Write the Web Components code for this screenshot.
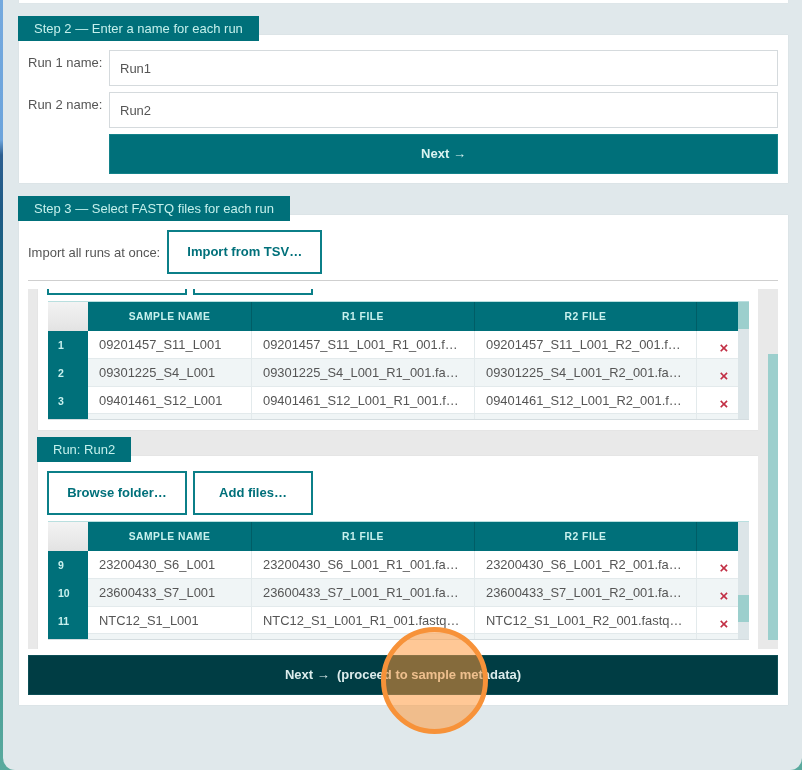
<!DOCTYPE html>
<html lang="en">
<head>
<meta charset="utf-8">
<title>Select FASTQ files</title>
<style>
    html, body { margin: 0; height: 770px; overflow: hidden; }
    body {
        font-family: "Liberation Sans", Arial, sans-serif;
        background: linear-gradient(to bottom, #74a9de 0, #6ca4dc 140px, #2d5f90 155px, #1e5a85 210px, #176a80 300px, #2f8a8c 500px, #5aaa9e 770px);
    }
</style>
</head>
<body>
<app-window>
    <step-panel label="Step 2 — Enter a name for each run" style="--pad-bottom: 9px; margin-bottom: 13px;">
        <name-field label="Run 1 name:" value="Run1"></name-field>
        <name-field label="Run 2 name:" value="Run2"></name-field>
        <teal-button style="margin-left: 81px;">Next →</teal-button>
    </step-panel>

    <step-panel label="Step 3 — Select FASTQ files for each run">
        <import-bar></import-bar>
        <scroll-area offset="-72" thumb-top="65" thumb-height="286">
            <step-panel label="Run: Run1" style="--pad-right: 9px; margin-bottom: 7px;">
                <file-buttons></file-buttons>
                <file-table thumb-top="0">
                    <file-row n="1" name="09201457_S11_L001" r1="09201457_S11_L001_R1_001.f…" r2="09201457_S11_L001_R2_001.f…"></file-row>
                    <file-row n="2" name="09301225_S4_L001" r1="09301225_S4_L001_R1_001.fa…" r2="09301225_S4_L001_R2_001.fa…"></file-row>
                    <file-row n="3" name="09401461_S12_L001" r1="09401461_S12_L001_R1_001.f…" r2="09401461_S12_L001_R2_001.f…"></file-row>
                    <file-row></file-row>
                </file-table>
            </step-panel>
            <step-panel label="Run: Run2" style="--pad-right: 9px;">
                <file-buttons></file-buttons>
                <file-table thumb-top="73">
                    <file-row n="9" name="23200430_S6_L001" r1="23200430_S6_L001_R1_001.fa…" r2="23200430_S6_L001_R2_001.fa…"></file-row>
                    <file-row n="10" name="23600433_S7_L001" r1="23600433_S7_L001_R1_001.fa…" r2="23600433_S7_L001_R2_001.fa…"></file-row>
                    <file-row n="11" name="NTC12_S1_L001" r1="NTC12_S1_L001_R1_001.fastq…" r2="NTC12_S1_L001_R2_001.fastq…"></file-row>
                    <file-row></file-row>
                </file-table>
            </step-panel>
        </scroll-area>
        <teal-button dark style="margin-top: 6px;">Next →&nbsp; (proceed to sample metadata)</teal-button>
    </step-panel>
    <tap-marker></tap-marker>
</app-window>

<script>
// small helper, every element just clones its own template
function makeTemplate(html) {
    const template = document.createElement('template');
    template.innerHTML = html;
    return template;
}

const windowTemplate = makeTemplate(`
    <style>
        :host {
            display: block;
            position: relative;
            box-sizing: border-box;
            height: 770px;
            margin-left: 3px;
            padding: 0 14px 0 15px;
            background: #e0e8eb;
            border-radius: 0 0 12px 12px;
            overflow: hidden;
            filter: blur(0.4px);
        }
        .stub {
            height: 3px;
            margin: 0 0 13px 1px;
            background: #fff;
            box-shadow: 0 0 1px rgba(0, 0, 0, 0.1);
        }
    </style>
    <div class="stub"></div>
    <slot></slot>
`);

class AppWindow extends HTMLElement {
    constructor() {
        super();
        this.attachShadow({ mode: 'open' }).appendChild(windowTemplate.content.cloneNode(true));
    }
}

const panelTemplate = makeTemplate(`
    <style>
        :host { display: block; }
        .tab {
            position: relative;
            z-index: 1;
            display: inline-block;
            vertical-align: top;
            height: 25px;
            line-height: 25px;
            padding: 0 16px;
            background: #00707a;
            color: #c4f0ec;
            font-size: 13px;
            white-space: nowrap;
        }
        .head { height: 25px; }
        .body {
            margin: -6px 0 0 1px;
            padding: 15px var(--pad-right, 10px) var(--pad-bottom, 10px) 9px;
            background: #fff;
            box-shadow: 0 0 1px rgba(0, 0, 0, 0.1);
        }
    </style>
    <div class="head"><span class="tab"></span></div>
    <div class="body"><slot></slot></div>
`);

class StepPanel extends HTMLElement {
    constructor() {
        super();
        const shadow = this.attachShadow({ mode: 'open' });
        shadow.appendChild(panelTemplate.content.cloneNode(true));
        shadow.querySelector('.tab').textContent = this.getAttribute('label');
    }
}

const fieldTemplate = makeTemplate(`
    <style>
        :host {
            display: flex;
            margin-bottom: 6px;
            font-size: 13px;
            color: #555;
        }
        .label { width: 81px; flex: none; padding-top: 5px; }
        .input {
            flex: 1;
            box-sizing: border-box;
            height: 36px;
            line-height: 34px;
            padding: 1px 10px 0;
            border: 1px solid #d5dadd;
            background: #fff;
        }
    </style>
    <div class="label"></div>
    <div class="input"></div>
`);

class NameField extends HTMLElement {
    constructor() {
        super();
        const shadow = this.attachShadow({ mode: 'open' });
        shadow.appendChild(fieldTemplate.content.cloneNode(true));
        shadow.querySelector('.label').textContent = this.getAttribute('label');
        shadow.querySelector('.input').textContent = this.getAttribute('value');
    }
}

const tealTemplate = makeTemplate(`
    <style>
        :host {
            display: block;
            box-sizing: border-box;
            height: 40px;
            line-height: 40px;
            text-align: center;
            background: #00707a;
            color: #d9f3f1;
            font-size: 13px;
            font-weight: bold;
            box-shadow: inset 0 0 0 1px #14828a;
        }
        :host([dark]) {
            background: #003d44;
            color: #dcecec;
            box-shadow: inset 0 0 0 1px #0d4f56;
        }
    </style>
    <slot></slot>
`);

class TealButton extends HTMLElement {
    constructor() {
        super();
        this.attachShadow({ mode: 'open' }).appendChild(tealTemplate.content.cloneNode(true));
    }
}

const outlineTemplate = makeTemplate(`
    <style>
        :host {
            display: inline-block;
            box-sizing: border-box;
            height: 44px;
            line-height: 40px;
            text-align: center;
            border: 2px solid #0b7f88;
            background: #fff;
            color: #00707a;
            font-size: 13px;
            font-weight: bold;
            white-space: nowrap;
        }
    </style>
    <slot></slot>
`);

class OutlineButton extends HTMLElement {
    constructor() {
        super();
        this.attachShadow({ mode: 'open' }).appendChild(outlineTemplate.content.cloneNode(true));
    }
}

const importTemplate = makeTemplate(`
    <style>
        :host {
            display: flex;
            align-items: center;
            gap: 7px;
            padding-bottom: 6px;
            margin-bottom: 8px;
            border-bottom: 1px solid #cfcfcf;
            font-size: 13px;
            color: #555;
        }
        outline-button { width: 155px; }
    </style>
    <span>Import all runs at once:</span>
    <outline-button>Import from TSV…</outline-button>
`);

class ImportBar extends HTMLElement {
    constructor() {
        super();
        this.attachShadow({ mode: 'open' }).appendChild(importTemplate.content.cloneNode(true));
    }
}

const scrollTemplate = makeTemplate(`
    <style>
        :host {
            display: flex;
            height: 360px;
            background: #e9e9e9;
        }
        .view {
            width: 721px;
            margin: 0 10px 0 9px;
            overflow: hidden;
        }
        .inner { margin-top: var(--offset); }
        .bar { width: 10px; }
        .thumb {
            margin-top: var(--thumb-top);
            height: var(--thumb-height);
            background: #9ccfcd;
        }
    </style>
    <div class="view"><div class="inner"><slot></slot></div></div>
    <div class="bar"><div class="thumb"></div></div>
`);

class ScrollArea extends HTMLElement {
    constructor() {
        super();
        this.attachShadow({ mode: 'open' }).appendChild(scrollTemplate.content.cloneNode(true));
        this.style.setProperty('--offset', this.getAttribute('offset') + 'px');
        this.style.setProperty('--thumb-top', this.getAttribute('thumb-top') + 'px');
        this.style.setProperty('--thumb-height', this.getAttribute('thumb-height') + 'px');
    }
}

const fileButtonsTemplate = makeTemplate(`
    <style>
        :host { display: flex; gap: 6px; margin-bottom: 6px; }
        .browse { width: 140px; }
        .add { width: 120px; }
    </style>
    <outline-button class="browse">Browse folder…</outline-button>
    <outline-button class="add">Add files…</outline-button>
`);

class FileButtons extends HTMLElement {
    constructor() {
        super();
        this.attachShadow({ mode: 'open' }).appendChild(fileButtonsTemplate.content.cloneNode(true));
    }
}

const tableTemplate = makeTemplate(`
    <style>
        :host {
            display: flex;
            box-sizing: border-box;
            width: 701px;
            height: 119px;
            margin-left: 1px;
            border-top: 1px solid #b9dfdf;
            border-bottom: 1px solid #d5dde0;
            overflow: hidden;
        }
        .main { width: 690px; flex: none; }
        .head {
            display: grid;
            grid-template-columns: 40px 164px 223px 222px 41px;
            height: 29px;
            line-height: 29px;
            background: #00707a;
            color: #c9f1ee;
            font-size: 10.3px;
            font-weight: bold;
            letter-spacing: 0.5px;
            text-align: center;
        }
        .head div { border-right: 1px solid #005d66; }
        .head div:last-child { border-right: 0; }
        .head .corner {
            border-right: 0;
            background: linear-gradient(#f3f3f3, #e3e3e3);
        }
        .bar { flex: 1; background: #dce5e8; }
        .thumb {
            height: 27px;
            margin-top: var(--thumb-top);
            background: #9ccfcd;
        }
    </style>
    <div class="main">
        <div class="head">
            <div class="corner"></div>
            <div>SAMPLE NAME</div>
            <div>R1 FILE</div>
            <div>R2 FILE</div>
            <div></div>
        </div>
        <slot></slot>
    </div>
    <div class="bar"><div class="thumb"></div></div>
`);

class FileTable extends HTMLElement {
    constructor() {
        super();
        this.attachShadow({ mode: 'open' }).appendChild(tableTemplate.content.cloneNode(true));
        this.style.setProperty('--thumb-top', this.getAttribute('thumb-top') + 'px');
    }
}

const rowTemplate = makeTemplate(`
    <style>
        :host {
            display: grid;
            grid-template-columns: 40px 164px 223px 222px 41px;
            height: 27.75px;
            line-height: 27px;
            background: #fff;
            font-size: 12.9px;
            color: #555;
        }
        :host(:nth-child(even)) { background: #f0f5f6; }
        div {
            box-sizing: border-box;
            padding-left: 11px;
            border-right: 1px solid #e3eaec;
            border-bottom: 1px solid #e3eaec;
            white-space: nowrap;
            overflow: hidden;
        }
        .num {
            padding-left: 10px;
            border: 0;
            background: #00707a;
            color: #c9f1ee;
            font-size: 10.5px;
            font-weight: bold;
            line-height: 28px;
        }
        .del {
            padding: 3px 0 0 13px;
            border-right: 0;
            text-align: center;
            color: #c22f45;
            font-size: 15px;
            font-weight: bold;
        }
    </style>
    <div class="num"></div>
    <div class="name"></div>
    <div class="r1"></div>
    <div class="r2"></div>
    <div class="del"></div>
`);

class FileRow extends HTMLElement {
    constructor() {
        super();
        const shadow = this.attachShadow({ mode: 'open' });
        shadow.appendChild(rowTemplate.content.cloneNode(true));
        shadow.querySelector('.num').textContent = this.getAttribute('n') || '';
        shadow.querySelector('.name').textContent = this.getAttribute('name') || '';
        shadow.querySelector('.r1').textContent = this.getAttribute('r1') || '';
        shadow.querySelector('.r2').textContent = this.getAttribute('r2') || '';
        shadow.querySelector('.del').textContent = this.hasAttribute('n') ? '×' : '';
    }
}

// the click marker sits over the page, so this one is absolute
const markerTemplate = makeTemplate(`
    <style>
        :host {
            position: absolute;
            left: 378px;
            top: 627px;
            box-sizing: border-box;
            width: 107px;
            height: 107px;
            border: 5px solid #f79239;
            border-radius: 50%;
            background: rgba(255, 150, 54, 0.52);
        }
    </style>
`);

class TapMarker extends HTMLElement {
    constructor() {
        super();
        this.attachShadow({ mode: 'open' }).appendChild(markerTemplate.content.cloneNode(true));
    }
}

customElements.define('app-window', AppWindow);
customElements.define('step-panel', StepPanel);
customElements.define('name-field', NameField);
customElements.define('teal-button', TealButton);
customElements.define('outline-button', OutlineButton);
customElements.define('import-bar', ImportBar);
customElements.define('scroll-area', ScrollArea);
customElements.define('file-buttons', FileButtons);
customElements.define('file-table', FileTable);
customElements.define('file-row', FileRow);
customElements.define('tap-marker', TapMarker);
</script>
</body>
</html>
